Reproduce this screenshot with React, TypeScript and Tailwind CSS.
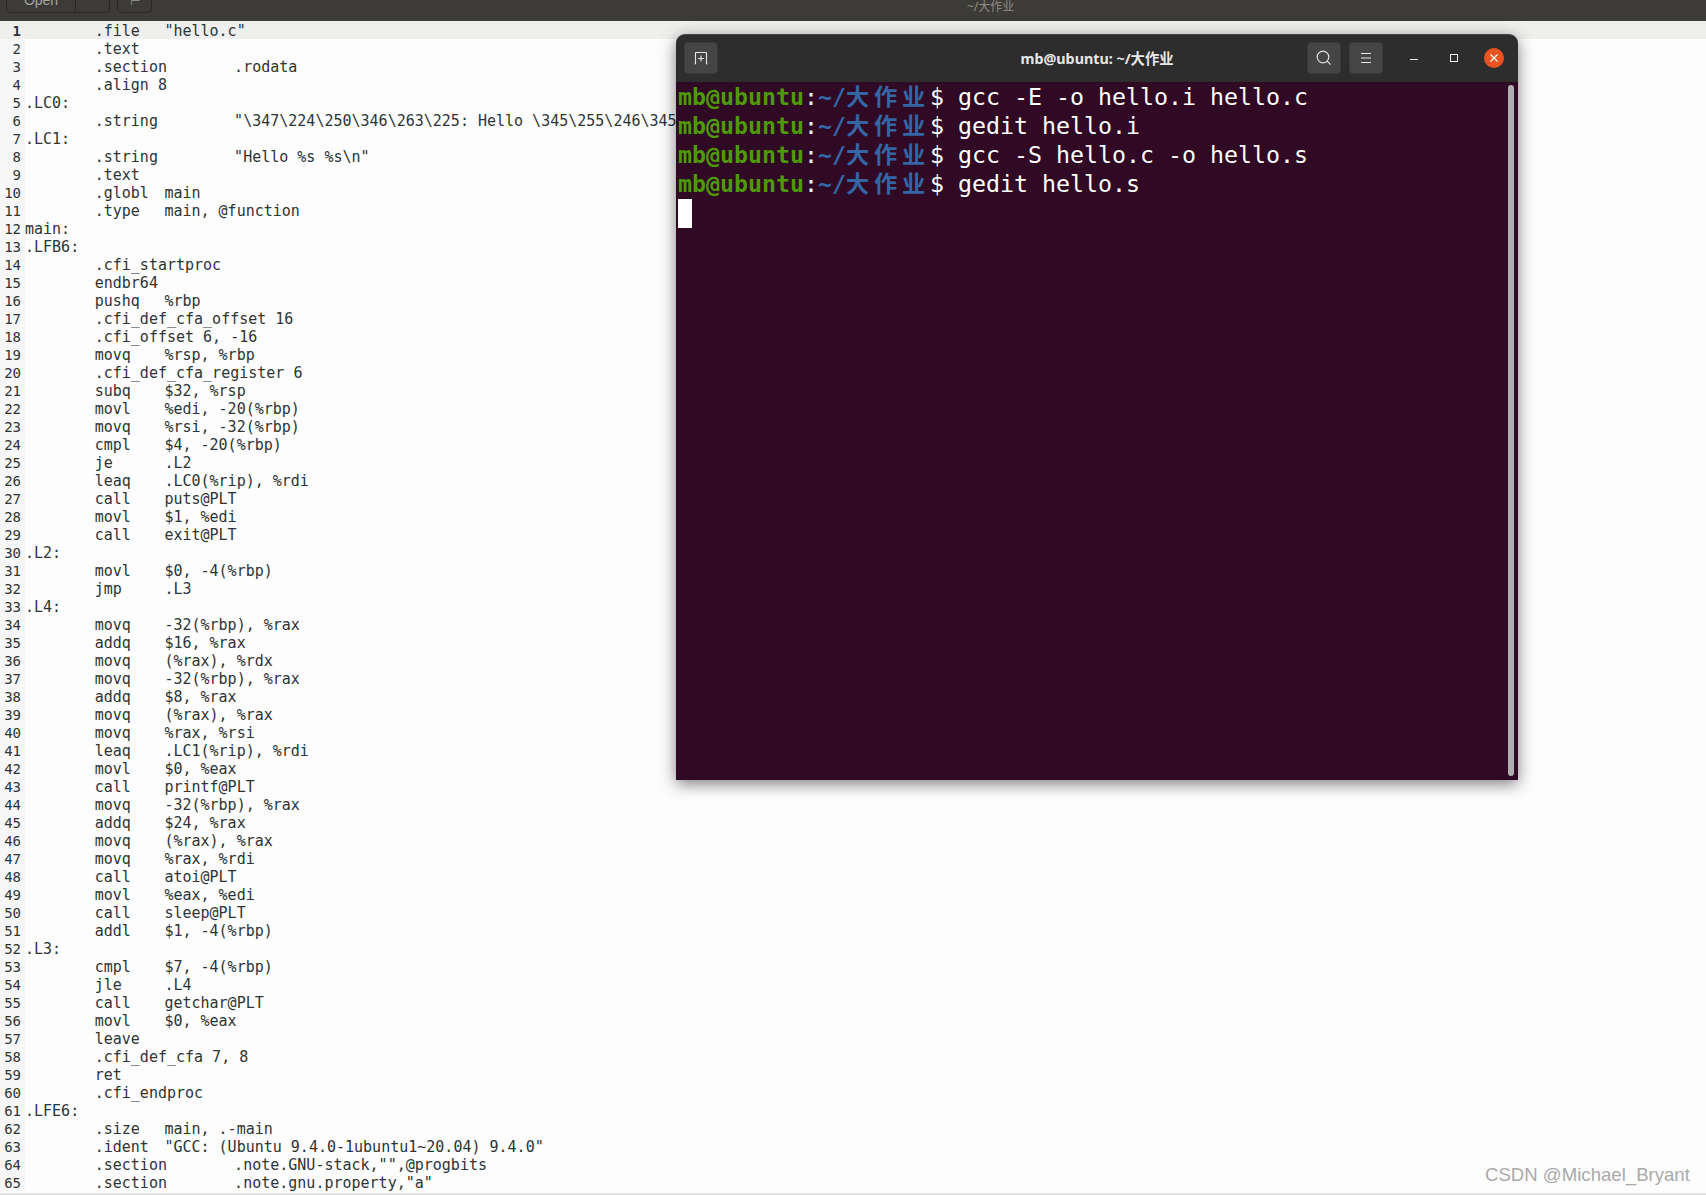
const code: string[] = [
  "\t.file\t\"hello.c\"",
  "\t.text",
  "\t.section\t.rodata",
  "\t.align 8",
  ".LC0:",
  "\t.string\t\t\"\\347\\224\\250\\346\\263\\225: Hello \\345\\255\\246\\345\\217\\267 \\345\\247\\223\\345\\220\\215 \\347\\247\\222\\346\\225\\260\\357\\274\\201\"",
  ".LC1:",
  "\t.string\t\t\"Hello %s %s\\n\"",
  "\t.text",
  "\t.globl\tmain",
  "\t.type\tmain, @function",
  "main:",
  ".LFB6:",
  "\t.cfi_startproc",
  "\tendbr64",
  "\tpushq\t%rbp",
  "\t.cfi_def_cfa_offset 16",
  "\t.cfi_offset 6, -16",
  "\tmovq\t%rsp, %rbp",
  "\t.cfi_def_cfa_register 6",
  "\tsubq\t$32, %rsp",
  "\tmovl\t%edi, -20(%rbp)",
  "\tmovq\t%rsi, -32(%rbp)",
  "\tcmpl\t$4, -20(%rbp)",
  "\tje\t.L2",
  "\tleaq\t.LC0(%rip), %rdi",
  "\tcall\tputs@PLT",
  "\tmovl\t$1, %edi",
  "\tcall\texit@PLT",
  ".L2:",
  "\tmovl\t$0, -4(%rbp)",
  "\tjmp\t.L3",
  ".L4:",
  "\tmovq\t-32(%rbp), %rax",
  "\taddq\t$16, %rax",
  "\tmovq\t(%rax), %rdx",
  "\tmovq\t-32(%rbp), %rax",
  "\taddq\t$8, %rax",
  "\tmovq\t(%rax), %rax",
  "\tmovq\t%rax, %rsi",
  "\tleaq\t.LC1(%rip), %rdi",
  "\tmovl\t$0, %eax",
  "\tcall\tprintf@PLT",
  "\tmovq\t-32(%rbp), %rax",
  "\taddq\t$24, %rax",
  "\tmovq\t(%rax), %rax",
  "\tmovq\t%rax, %rdi",
  "\tcall\tatoi@PLT",
  "\tmovl\t%eax, %edi",
  "\tcall\tsleep@PLT",
  "\taddl\t$1, -4(%rbp)",
  ".L3:",
  "\tcmpl\t$7, -4(%rbp)",
  "\tjle\t.L4",
  "\tcall\tgetchar@PLT",
  "\tmovl\t$0, %eax",
  "\tleave",
  "\t.cfi_def_cfa 7, 8",
  "\tret",
  "\t.cfi_endproc",
  ".LFE6:",
  "\t.size\tmain, .-main",
  "\t.ident\t\"GCC: (Ubuntu 9.4.0-1ubuntu1~20.04) 9.4.0\"",
  "\t.section\t.note.GNU-stack,\"\",@progbits",
  "\t.section\t.note.gnu.property,\"a\"",
];

const commands = [
  "gcc -E -o hello.i hello.c",
  "gedit hello.i",
  "gcc -S hello.c -o hello.s",
  "gedit hello.s",
];

function Prompt({ cmd }: { cmd: string }) {
  return (
    <div className="h-[29px] whitespace-pre">
      <span className="font-bold text-[#4e9a06]">mb@ubuntu</span>
      <span className="text-[#eeeeec]">:</span>
      <span className="font-bold text-[#3465a4]">~/</span>
      <span className="font-bold text-[#3465a4] tracking-[4.75px]">大作业</span>
      <span className="text-[#ffffff]">$ {cmd}</span>
    </div>
  );
}

function TitleButton({ x, children }: { x: string; children: React.ReactNode }) {
  return (
    <div className={`w-[34px] h-[32px] rounded-[4px] bg-[#454545] border border-[#3a3a3a] flex items-center justify-center ${x}`}>
      {children}
    </div>
  );
}

export default function App() {
  return (
    <div className="relative w-[1706px] h-[1195px] overflow-hidden bg-[#fdfdfd] font-['DejaVu_Sans_Mono','Noto_Sans_CJK_SC',monospace]">
      {/* gedit header, cropped at the top */}
      <div className="relative h-[21px] bg-[#3c3b37] overflow-hidden">
        <div className="flex items-end h-[13px] pl-[6px] gap-[7px] font-['Liberation_Sans',sans-serif]">
          <div className="flex h-[13px] w-[104px] border border-t-0 border-[#2a2926] rounded-b-[5px]">
            <div className="w-[69px] border-r border-[#2a2926] text-center text-[14px] leading-[1px] text-[#a5a4a0]">Open</div>
          </div>
          <div className="w-[35px] h-[13px] border border-t-0 border-[#2a2926] rounded-b-[5px] text-center text-[12px] leading-[2px] text-[#8f8e8a]">
            ⊢
          </div>
        </div>
        <div className="absolute left-[967px] top-[-1px] text-[12px] leading-[16px] text-[#8f8e8a] font-['Noto_Sans','Noto_Sans_CJK_SC',sans-serif]">
          ~/大作业
        </div>
      </div>

      {/* editor */}
      <div className="text-[15px] leading-[18px] text-[#2e3436]">
        {code.map((line, i) => (
          <div key={i} className={`flex h-[18px] ${i === 0 ? "bg-[#efefed]" : ""}`}>
            <div className={`w-[21px] h-[18px] pt-px shrink-0 text-right text-[14px] ${i === 0 ? "font-bold" : "bg-[#f7f7f7]"}`}>{i + 1}</div>
            <div className={`w-[4px] shrink-0 ${i === 0 ? "" : "bg-[#f7f7f7]"}`} />
            <div className="h-[18px] pt-px whitespace-pre [tab-size:69.7px]">{line}</div>
          </div>
        ))}
      </div>

      <div className="absolute left-0 right-0 bottom-0 h-[2px] bg-[#e4e4e4]" />

      {/* terminal window */}
      <div className="absolute left-[676px] top-[34px] w-[842px] h-[746px] flex flex-col rounded-t-[9px] shadow-[0_4px_16px_rgba(0,0,0,0.5)]">
        <div className="relative h-[48px] shrink-0 flex items-center rounded-t-[9px] bg-[#2d2d2d] border-t border-[#454545] pl-[8px] pr-[14px] pb-[2px]">
          <TitleButton x="">
            <svg width="16" height="16" viewBox="0 0 16 16" fill="none" stroke="#e6e6e6" strokeWidth="1.1">
              <path d="M2.5 14 V3 Q2.5 2.5 3 2.5 H13 Q13.5 2.5 13.5 3 V14 M1.5 14 H2.5 M13.5 14 H14.5" />
              <path d="M8 5.5 V11.5 M5 8.5 H11" />
            </svg>
          </TitleButton>
          <div className="absolute left-0 right-0 top-[11px] text-center text-[14.3px] leading-[26px] font-bold text-[#e8e8e8] pointer-events-none font-['Noto_Sans','Noto_Sans_CJK_SC',sans-serif]">
            mb@ubuntu: ~/大作业
          </div>
          <div className="ml-auto flex items-center">
            <TitleButton x="">
              <svg width="16" height="16" viewBox="0 0 16 16" fill="none" stroke="#e0e0e0" strokeWidth="1.2">
                <circle cx="7" cy="7" r="5.8" />
                <path d="M11.2 11.2 L14.6 14.6" />
              </svg>
            </TitleButton>
            <TitleButton x="ml-[8px]">
              <svg width="12" height="12" viewBox="0 0 12 12" stroke="#e6e6e6" strokeWidth="1">
                <path d="M1 1.5 H11 M1 6 H11 M1 10.5 H11" />
              </svg>
            </TitleButton>
            <div className="ml-[27px] w-[8px] h-[1px] mt-[4px] bg-[#f0f0f0]" />
            <div className="ml-[32px] w-[8px] h-[8px] border border-[#f0f0f0]" />
            <div className="ml-[26px] w-[20px] h-[20px] rounded-full bg-[#e95420] flex items-center justify-center">
              <svg width="8" height="8" viewBox="0 0 8 8" stroke="#ffffff" strokeWidth="1.2">
                <path d="M0.5 0.5 L7.5 7.5 M7.5 0.5 L0.5 7.5" />
              </svg>
            </div>
          </div>
        </div>
        <div className="relative flex-1 bg-[#300a24] pl-[2px] text-[23.25px] leading-[29px]">
          {commands.map((c) => (
            <Prompt key={c} cmd={c} />
          ))}
          <div className="w-[14px] h-[29px] mt-px bg-white" />
          <div className="absolute right-[4px] top-[3px] bottom-[4px] w-[6px] rounded-full bg-[#b0b0b0]" />
        </div>
      </div>

      <div className="absolute left-[1485px] top-[1163px] text-[18.6px] leading-[24px] text-[#aaaaaa] font-['Liberation_Sans',sans-serif]">
        CSDN @Michael_Bryant
      </div>
    </div>
  );
}
